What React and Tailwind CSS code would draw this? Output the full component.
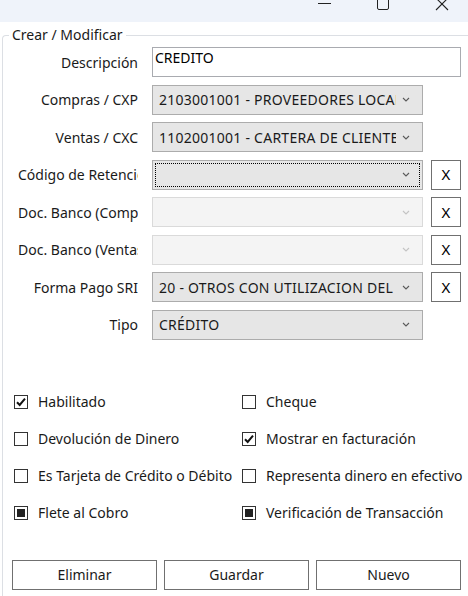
import React from "react";

const font = { fontFamily: '"Noto Sans", "Open Sans", sans-serif' };

function Chevron({ disabled }) {
  return (
    <svg width="8" height="5" viewBox="0 0 8 5" className="shrink-0">
      <path d="M1 1 L4 4 L7 1" fill="none" stroke={disabled ? "#c4c4c4" : "#5a5a5a"} strokeWidth="1.1" />
    </svg>
  );
}

function Combo({ value, disabled, focused }) {
  return (
    <div
      className={
        "relative w-[271px] h-[30px] shrink-0 border flex items-center pl-[6px] pr-[6px] " +
        (disabled ? "bg-[#f4f4f4] border-[#dadada]" : "bg-[#e6e6e6] border-[#acacac]")
      }
    >
      {focused && <div className="absolute inset-[2px] border border-dotted border-black" />}
      <div className="flex-1 min-w-0 overflow-hidden whitespace-nowrap text-[14px] tracking-[0.25px] text-[#1a1a1a]">{value}</div>
      <div className="w-[20px] flex justify-center">
        <Chevron disabled={disabled} />
      </div>
    </div>
  );
}

function XButton() {
  return (
    <div className="ml-[8px] w-[30px] h-[30px] border border-[#707070] bg-white flex items-center justify-center text-[15px] text-black">
      X
    </div>
  );
}

function Row({ label, children }) {
  return (
    <div className="flex items-center h-[30px]">
      <div className="w-[120px] ml-[15px] mr-[14px] overflow-hidden whitespace-nowrap text-right text-[14px] text-[#1a1a1a]">
        {label}
      </div>
      {children}
    </div>
  );
}

function Check({ state, label }) {
  return (
    <div className="flex items-center h-[20px]">
      <div className="w-[14px] h-[14px] border border-[#333] bg-white flex items-center justify-center shrink-0">
        {state === "checked" && (
          <svg width="12" height="12" viewBox="0 0 12 12">
            <path d="M2 6.2 L4.7 9 L10 2.6" fill="none" stroke="#111" strokeWidth="2" />
          </svg>
        )}
        {state === "fill" && <div className="w-[8px] h-[8px] bg-[#222]" />}
      </div>
      <span className="ml-[10px] whitespace-nowrap text-[14px] text-[#1a1a1a]">{label}</span>
    </div>
  );
}

function Btn({ children }) {
  return (
    <div className="w-[145px] h-[30px] border border-[#707070] bg-white flex items-center justify-center text-[14px] text-[#1a1a1a]">
      {children}
    </div>
  );
}

export default function App() {
  return (
    <div className="w-[468px] h-[596px] overflow-hidden bg-white relative" style={font}>
      {/* title bar */}
      <div className="h-[22px] bg-[#eff3fa] relative">
        <svg className="absolute left-0 top-0" width="468" height="22">
          <line x1="318" y1="3.5" x2="331" y2="3.5" stroke="#222" strokeWidth="1" />
          <rect x="377.5" y="-3" width="11" height="12.5" rx="1.5" fill="none" stroke="#222" strokeWidth="1" />
          <path d="M436 -2 L448 10 M448 -2 L436 10" stroke="#222" strokeWidth="1.1" />
        </svg>
      </div>

      <div className="pl-[2px] pt-[5px]">
        <fieldset className="border-l border-t border-[#dcdfe4] rounded-tl-[4px] w-[520px] h-[600px] pt-[2px]">
          <legend className="ml-[6px] px-[3px] text-[14px] text-[#1a1a1a] leading-[16px]">Crear / Modificar</legend>

          <div className="flex flex-col gap-[7.5px] mt-[2px]">
            <Row label="Descripción">
              <div className="w-[309px] h-[30px] border border-[#a9abb0] bg-white px-[2px] pt-[1px] text-[14px] text-black leading-[18px]">
                CREDITO
              </div>
            </Row>
            <Row label="Compras / CXP">
              <Combo value="2103001001 - PROVEEDORES LOCALES" />
            </Row>
            <Row label="Ventas / CXC">
              <Combo value="1102001001 - CARTERA DE CLIENTES" />
            </Row>
            <Row label="Código de Retención">
              <Combo value="" focused />
              <XButton />
            </Row>
            <Row label="Doc. Banco (Compras)">
              <Combo value="" disabled />
              <XButton />
            </Row>
            <Row label="Doc. Banco (Ventas)">
              <Combo value="" disabled />
              <XButton />
            </Row>
            <Row label="Forma Pago SRI">
              <Combo value="20 - OTROS CON UTILIZACION DEL SISTEMA FINANCIERO" />
              <XButton />
            </Row>
            <Row label="Tipo">
              <Combo value="CRÉDITO" />
            </Row>
          </div>

          <div className="mt-[52px] ml-[11px] grid grid-cols-[228px_1fr] gap-y-[17px]">
            <Check state="checked" label="Habilitado" />
            <Check state="none" label="Cheque" />
            <Check state="none" label="Devolución de Dinero" />
            <Check state="checked" label="Mostrar en facturación" />
            <Check state="none" label="Es Tarjeta de Crédito o Débito" />
            <Check state="none" label="Representa dinero en efectivo" />
            <Check state="fill" label="Flete al Cobro" />
            <Check state="fill" label="Verificación de Transacción" />
          </div>

          <div className="mt-[37px] ml-[9px] flex gap-[7px]">
            <Btn>Eliminar</Btn>
            <Btn>Guardar</Btn>
            <Btn>Nuevo</Btn>
          </div>
        </fieldset>
      </div>
    </div>
  );
}
